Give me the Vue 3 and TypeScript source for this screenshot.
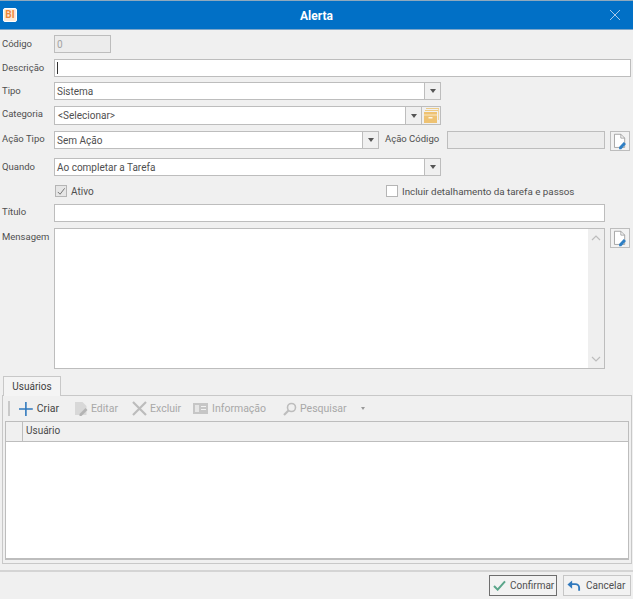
<script setup lang="ts">
const pagePath = "M1.5 1.5h7.5l4.5 4.5v11h-12z";
const foldPath = "M9 1.5v4.5h4.5";
const pencilPath = "M7 16.500l5.500-6 2.500 2.500-5.500 6H7z";
</script>

<template>
  <div class="win">
    <header class="title">
      <span class="logo">BI</span>
      <span class="title-text">Alerta</span>
      <svg class="close" width="12" height="12" viewBox="0 0 12 12"><path d="M1 1l10 10M11 1L1 11" stroke="#a9c9e8" stroke-width="1" fill="none" /></svg>
    </header>

    <main class="form">
      <div class="row r1">
        <label>Código</label>
        <div class="input disabled code">0</div>
      </div>
      <div class="row r2">
        <label>Descrição</label>
        <div class="input full"><span class="caret"></span></div>
      </div>
      <div class="row r3">
        <label>Tipo</label>
        <div class="input combo w387"><span class="val">Sistema</span><span class="drop"><i></i></span></div>
      </div>
      <div class="row r4">
        <label class="up">Categoria</label>
        <div class="input combo w387">
          <span class="val sel">&lt;Selecionar&gt;</span>
          <span class="drop"><i></i></span>
          <span class="box">
            <svg width="17" height="17" viewBox="0 0 17 17">
              <path d="M3 1h13v1H3zM2 3h13v1H2z" fill="#eecb85" />
              <path d="M15 2h1v11h-1z" fill="#f0d59e" />
              <path d="M1 5h13v11H1z" fill="#eec272" />
              <path d="M1 7.500h13v1H1z" fill="#fbe9c6" />
              <path d="M5.500 10h4v1.500h-4z" fill="#fff6e4" />
            </svg>
          </span>
        </div>
      </div>
      <div class="row r5">
        <label class="up">Ação Tipo</label>
        <div class="input combo w325"><span class="val">Sem Ação</span><span class="drop"><i></i></span></div>
        <label class="inner up">Ação Código</label>
        <div class="input disabled code2"></div>
        <button class="doc-btn">
          <svg width="14" height="17" viewBox="0 0 16 20">
            <path :d="pagePath" fill="#fff" stroke="#9a9a9a" />
            <path :d="foldPath" fill="none" stroke="#9a9a9a" />
            <path :d="pencilPath" fill="#2f7fc4" />
          </svg>
        </button>
      </div>
      <div class="row r6">
        <label>Quando</label>
        <div class="input combo w387"><span class="val">Ao completar a Tarefa</span><span class="drop"><i></i></span></div>
      </div>
      <div class="row r7">
        <span class="check on">
          <svg width="11" height="11" viewBox="0 0 11 11"><path d="M2 6l2.500 2.500L9.500 2" fill="none" stroke="#777" stroke-width="1.100" /></svg>
        </span>
        <span class="check-label">Ativo</span>
        <span class="check off"></span>
        <span class="check-label second">Incluir detalhamento da tarefa e passos</span>
      </div>
      <div class="row r8">
        <label class="up">Título</label>
        <div class="input w551"></div>
      </div>
      <div class="row r9">
        <label class="msg">Mensagem</label>
        <div class="input memo">
          <div class="scroll">
            <svg width="10" height="6" viewBox="0 0 10 6"><path d="M1 5l4-4 4 4" fill="none" stroke="#bdbdbd" stroke-width="1.200" /></svg>
            <svg width="10" height="6" viewBox="0 0 10 6"><path d="M1 1l4 4 4-4" fill="none" stroke="#bdbdbd" stroke-width="1.200" /></svg>
          </div>
        </div>
        <button class="doc-btn">
          <svg width="14" height="17" viewBox="0 0 16 20">
            <path :d="pagePath" fill="#fff" stroke="#9a9a9a" />
            <path :d="foldPath" fill="none" stroke="#9a9a9a" />
            <path :d="pencilPath" fill="#2f7fc4" />
          </svg>
        </button>
      </div>
    </main>

    <section class="tabs">
      <div class="tab">Usuários</div>
      <div class="panel">
        <div class="toolbar">
          <span class="grip"></span>
          <span class="tool t-create">
            <svg width="14" height="14" viewBox="0 0 14 14"><path d="M7 0v14M0 7h14" stroke="#2f78bd" stroke-width="1.600" /></svg>
            Criar
          </span>
          <span class="tool t-edit">
            <svg width="14" height="15" viewBox="0 0 14 15"><path d="M1 1h7.500l4 4v9H1z" fill="#d8d8d8" /><path d="M5.500 13l6-6 2 2-6 6H5.500z" fill="#b4b4b4" /></svg>
            Editar
          </span>
          <span class="tool t-delete">
            <svg width="15" height="15" viewBox="0 0 15 15"><path d="M1 1l13 13M14 1L1 14" stroke="#bcbcbc" stroke-width="2.200" /></svg>
            Excluir
          </span>
          <span class="tool t-info">
            <svg width="15" height="11" viewBox="0 0 15 11"><path d="M0 0h15v11H0z" fill="#c6c6c6" /><path d="M2 2h4v7H2z" fill="#e6e6e6" /><path d="M8 3h5v1H8zM8 6h5v1H8z" fill="#f2f2f2" /></svg>
            Informação
          </span>
          <span class="tool t-search">
            <svg width="14" height="14" viewBox="0 0 14 14"><circle cx="8.500" cy="5.500" r="4" fill="none" stroke="#bdbdbd" stroke-width="1.600" /><path d="M5.500 8.500L1 13" stroke="#bdbdbd" stroke-width="2.200" /></svg>
            Pesquisar
          </span>
          <span class="more"></span>
        </div>
        <div class="grid">
          <div class="grid-head">
            <span class="indicator"></span>
            <span class="col">Usuário</span>
          </div>
          <div class="grid-body"></div>
        </div>
      </div>
    </section>

    <footer class="foot">
      <button class="btn default">
        <svg width="13" height="11" viewBox="0 0 14 12"><path d="M1 6.500l4 4L13 1.500" fill="none" stroke="#5aa58a" stroke-width="2.200" /></svg>
        <span>Confirmar</span>
      </button>
      <button class="btn cancel">
        <svg width="14" height="12" viewBox="0 0 15 12"><path d="M3 4h6a4 4 0 0 1 4 4v3" fill="none" stroke="#2f78bd" stroke-width="2" /><path d="M0.500 4.500L5.500 0v9z" fill="#2f78bd" /></svg>
        <span>Cancelar</span>
      </button>
    </footer>
  </div>
</template>

<style scoped>
.win {
  width: 633px;
  height: 599px;
  background: #f0f0f0;
  font-family: Roboto, "Liberation Sans", Arial, sans-serif;
  font-size: 10px;
  color: #4f4f4f;
  display: flex;
  flex-direction: column;
  overflow: hidden;
  box-sizing: border-box;
}
.title {
  height: 30px;
  flex: none;
  box-sizing: border-box;
  background: #0170c6;
  border-top: 1px solid #8fa9bd;
  border-bottom: 1px solid #7da6c9;
  display: flex;
  align-items: center;
}
.logo {
  width: 14px;
  height: 14px;
  margin-left: 3px;
  box-sizing: border-box;
  background: #fde9d8;
  border: 1px solid #fff;
  border-radius: 2px;
  color: #f0873a;
  font-weight: 700;
  font-size: 10px;
  line-height: 12px;
  text-align: center;
}
.title-text {
  flex: 1;
  text-align: center;
  color: #fff;
  font-weight: 700;
  font-size: 12px;
  margin-left: 7px;
  padding-top: 2px;
}
.close { margin-right: 12px; }

.form {
  padding: 5px 2px 0 2px;
  height: 346px;
  box-sizing: border-box;
  flex: none;
}
.row {
  display: flex;
  align-items: center;
}
.row > label {
  width: 52px;
  flex: none;
  white-space: nowrap;
  font-size: 9.500px;
  padding-bottom: 2px;
}
label.up { padding-bottom: 4px; }
.row > label.up { padding-bottom: 4px; }
.r1 { height: 18px; }
.r2 { height: 18px; margin-top: 6px; }
.r3 { height: 18px; margin-top: 5px; }
.r4 { height: 19px; margin-top: 6px; }
.r5 { height: 18px; margin-top: 6px; }
.r6 { height: 18px; margin-top: 9px; }
.r7 { height: 12px; margin-top: 9px; padding-left: 53px; }
.r8 { height: 18px; margin-top: 7px; }
.r9 { height: 141px; margin-top: 6px; align-items: flex-start; }
.r9 .msg { padding-top: 3px; }

.input {
  box-sizing: border-box;
  height: 100%;
  background: #fff;
  border: 1px solid #bdbdbd;
  display: flex;
  align-items: center;
  padding-left: 2px;
  white-space: nowrap;
}
.disabled { background: #ececec; color: #a3a3a3; }
.code { width: 57px; }
.full { width: 577px; flex: none; }
.caret { width: 1px; height: 12px; background: #333; }
.val { flex: 1; }
.sel { padding-left: 1px; }
.w387 { width: 387px; flex: none; }
.w325 { width: 325px; flex: none; }
.w551 { width: 551px; flex: none; }
.drop {
  width: 15px;
  height: 100%;
  flex: none;
  background: #f0f0f0;
  border-left: 1px solid #bdbdbd;
  display: flex;
  align-items: center;
  justify-content: center;
}
.drop i {
  width: 0;
  height: 0;
  border-left: 3.500px solid transparent;
  border-right: 3.500px solid transparent;
  border-top: 4px solid #555;
}
.box {
  width: 18px;
  height: 100%;
  flex: none;
  background: #f0f0f0;
  border-left: 1px solid #bdbdbd;
  display: flex;
  align-items: center;
  justify-content: center;
}
.row > .inner { margin-left: 6px; width: 62px; }
.code2 { width: 158px; flex: none; }
.doc-btn {
  width: 20px;
  height: 20px;
  margin-left: 5px;
  padding: 0;
  flex: none;
  box-sizing: border-box;
  background: #f2f2f2;
  border: 1px solid #bdbdbd;
  display: flex;
  align-items: center;
  justify-content: center;
}
.r5 .doc-btn { margin-top: 2px; }
.check {
  box-sizing: border-box;
  width: 12px;
  height: 12px;
  flex: none;
  border: 1px solid #b5b5b5;
  display: flex;
  align-items: center;
  justify-content: center;
}
.check.on { background: #e6e6e6; }
.check.off { background: #fff; margin-left: 285px; }
.check-label { margin-left: 4px; width: 30px; }
.check-label.second { width: auto; white-space: nowrap; font-size: 9.800px; }
.memo {
  width: 551px;
  flex: none;
  padding: 0;
  justify-content: flex-end;
}
.scroll {
  width: 16px;
  height: 100%;
  background: #efefef;
  display: flex;
  flex-direction: column;
  align-items: center;
  justify-content: space-between;
  padding: 6px 0;
  box-sizing: border-box;
}

.tabs {
  flex: none;
  height: 188px;
  margin: 0 1px 6px 2px;
  display: flex;
  flex-direction: column;
}
.tab {
  width: 58px;
  height: 20px;
  box-sizing: border-box;
  margin-left: 1px;
  border: 1px solid #c8c8c8;
  border-bottom: none;
  background: #f4f4f4;
  text-align: center;
  line-height: 19px;
  color: #3d3d3d;
  position: relative;
  z-index: 1;
  margin-bottom: -1px;
}
.panel {
  flex: 1;
  border: 1px solid #c8c8c8;
  display: flex;
  flex-direction: column;
  padding: 0 1px 2px 2px;
  min-height: 0;
}
.toolbar {
  height: 25px;
  flex: none;
  display: flex;
  align-items: center;
  color: #a8a8a8;
  font-size: 10.500px;
}
.grip {
  width: 2px;
  height: 15px;
  margin-left: 3px;
  background: #c9c9c9;
}
.tool {
  display: flex;
  align-items: center;
  gap: 4px;
  white-space: nowrap;
}
.t-create { color: #444; margin-left: 9px; width: 40px; }
.t-edit { margin-left: 15px; gap: 3px; }
.t-delete { margin-left: 14px; gap: 3px; }
.t-info { margin-left: 12px; gap: 4px; }
.t-search { margin-left: 17px; gap: 3px; }
.more {
  width: 0;
  height: 0;
  margin-left: 14px;
  border-left: 2.500px solid transparent;
  border-right: 2.500px solid transparent;
  border-top: 3px solid #999;
}
.grid {
  width: 624px;
  height: 139px;
  flex: none;
  box-sizing: border-box;
  border: 1px solid #bdbdbd;
  border-bottom-width: 2px;
  display: flex;
  flex-direction: column;
  background: #fff;
}
.grid-head {
  height: 19px;
  flex: none;
  display: flex;
  background: #f0f0f0;
  border-bottom: 1px solid #bdbdbd;
}
.indicator {
  width: 16px;
  border-right: 1px solid #bdbdbd;
}
.col {
  padding-left: 3px;
  line-height: 18px;
  color: #4a4a4a;
}
.grid-body { flex: 1; }

.foot {
  flex: 1;
  box-sizing: border-box;
  border-top: 2px solid #d4d4d4;
  display: flex;
  justify-content: flex-end;
  align-items: flex-start;
  gap: 6px;
  padding: 3px 2px 0 0;
}
.btn {
  height: 21px;
  box-sizing: border-box;
  width: 68px;
  font: inherit;
  color: #4f4f4f;
  background: #f2f2f2;
  border: 1px solid #c6c6c6;
  display: flex;
  align-items: center;
  gap: 4px;
  padding: 0 0 0 3px;
}
.btn.default { border: 1px solid #6e6e6e; }
.btn.cancel { gap: 5px; }
</style>
